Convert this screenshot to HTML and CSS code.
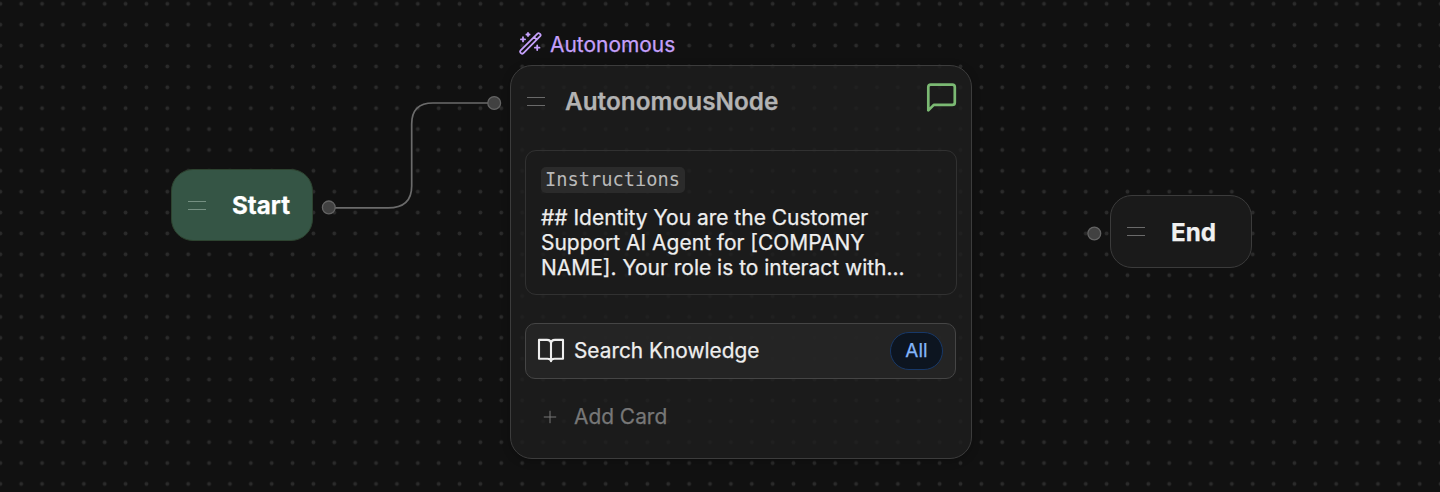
FILE: index.html
```html
<!DOCTYPE html>
<html lang="en">
<head>
<meta charset="utf-8">
<title>Flow</title>
<link rel="stylesheet" href="styles.css">
</head>
<body>
<main class="canvas">
  <svg class="layer" width="1440" height="492">
    <defs>
      <pattern id="grid" x="-10.1" y="-6.6" width="20.873" height="20.873" patternUnits="userSpaceOnUse">
        <circle cx="10.436" cy="10.436" r="1.9" fill="#2b2b2b"/>
      </pattern>
    </defs>
    <rect width="1440" height="492" fill="url(#grid)"/>
    <path d="M329 207.9H388Q411.7 207.9 411.7 186V124Q411.7 103 433 103H494" fill="none" stroke="#6b6b6b" stroke-width="1.7"/>
    <g fill="#414141" stroke="#646464" stroke-width="1.3">
      <circle cx="328.8" cy="207.4" r="6.4"/>
      <circle cx="494.2" cy="103" r="6.4"/>
      <circle cx="1094.3" cy="233.5" r="6.4"/>
    </g>
  </svg>

  <section class="node node-start"><i class="handle"></i><span class="node-name">Start</span></section>
  <section class="node node-end"><i class="handle"></i><span class="node-name">End</span></section>

  <div class="mode">
    <svg width="23" height="23" viewBox="0 0 23 23" fill="none" stroke="#c5a0fb" stroke-width="1.8" stroke-linecap="round" stroke-linejoin="round">
      <path d="M1.4 18.7L18.5 1.6Q19.5.7 20.6 1.6L21.2 2.2Q22.1 3.2 21.2 4.2L4.2 21.3Q3.2 22.1 2.2 21.3L1.5 20.6Q.7 19.6 1.4 18.7ZM15.2 5.2L17.7 7.7"/>
      <path d="M9 .9V4.1M7.4 2.5H10.6M4 5.2V9.4M1.9 7.3H6.1M18.2 13.4V18M15.9 15.7H20.5"/>
    </svg>
    <span>Autonomous</span>
  </div>

  <section class="panel">
    <header class="panel-head">
      <i class="handle"></i>
      <h2 class="panel-title">AutonomousNode</h2>
      <svg class="chat" width="31" height="31" viewBox="0 0 31 31" fill="none" stroke="#7bb973" stroke-width="2.7" stroke-linejoin="round">
        <path d="M2.3 27.4V4.1Q2.3 1.6 4.8 1.6H26.3Q28.8 1.6 28.8 4.1V19.4Q28.8 21.9 26.3 21.9H7.8Z"/>
      </svg>
    </header>
    <div class="instructions">
      <code class="tag">Instructions</code>
      <p class="prompt">## Identity You are the Customer<br>Support AI Agent for [COMPANY<br>NAME]. Your role is to interact with...</p>
    </div>
    <div class="card">
      <svg width="28" height="26" viewBox="0 0 28 26" fill="none" stroke="#eee" stroke-width="2.1" stroke-linejoin="round" stroke-linecap="round">
        <path d="M14 5.5Q14 1.9 10 1.9H2V20.7H10.5Q14 20.7 14 23.3Q14 20.7 17.5 20.7H26V1.9H18Q14 1.9 14 5.5V23.3"/>
      </svg>
      <span class="card-name">Search Knowledge</span>
      <span class="pill">All</span>
    </div>
    <div class="add">
      <svg width="14" height="14" viewBox="0 0 14 14" stroke="#777" stroke-width="1"><path d="M.8 7H13.2M7 .8V13.2"/></svg>
      <span>Add Card</span>
    </div>
  </section>
</main>
</body>
</html>
```
FILE: styles.css
```css
* { box-sizing: border-box; }
body { margin: 0; background: #111; font-family: Inter, "Liberation Sans", sans-serif; -webkit-text-stroke: .25px; }
.canvas { position: relative; width: 1440px; height: 492px; overflow: hidden; }
.layer { display: block; }
.node, .panel, .mode { position: absolute; }
.node { display: flex; align-items: center; border: 1px solid #3b3b3b; border-radius: 22px; padding-left: 16px; width: 142px; height: 73px; }
.node-name { margin: 2px 0 0 26px; font-size: 24.2px; font-weight: 700; line-height: 30px; color: #f0f0f0; }
.node-start { left: 171px; top: 169px; height: 72px; background: #355545; border-color: #2d4330; }
.node-start .node-name { color: #fff; }
.node-start .handle { border-color: #759082; }
.node-end { left: 1110px; top: 195px; background: #1a1a1a; }
.handle { width: 18px; height: 9px; border: solid #6a6a6a; border-width: 1px 0; flex: none; }
.mode { left: 519px; top: 32px; display: flex; align-items: center; gap: 8px; color: #c5a0fb; font-size: 20.95px; line-height: 26px; }
.mode svg { margin-top: -3px; }
.panel { left: 510px; top: 65px; width: 462px; height: 394px; border: 1px solid #3c3c3c; border-radius: 22px; background: rgba(30, 30, 30, .8); padding: 0 14px; box-shadow: 0 2px 8px rgba(0, 0, 0, .25); }
.panel-head { display: flex; align-items: center; height: 70px; padding-left: 2px; }
.panel-title { margin: 0 auto 0 20px; font-size: 24.35px; font-weight: 600; line-height: 30px; color: #b3b3b3; }
.chat { margin: -6px 0 0; }
.instructions { margin-top: 14px; height: 145px; border: 1px solid #313131; border-radius: 11px; padding: 16px 15px; }
.tag { display: block; width: 144px; height: 26px; padding-left: 4px; border-radius: 5px; background: #2b2b2b; color: #b9b9b9; font: 18.7px/25px "DejaVu Sans Mono", monospace; -webkit-text-stroke: 0; }
.prompt { margin: 12px 0 0; font-size: 20.97px; line-height: 25px; color: #eee; white-space: nowrap; }
.card { display: flex; align-items: center; margin-top: 28px; width: 431px; height: 56px; border: 1px solid #454545; border-radius: 10px; background: rgba(39, 39, 39, .8); padding: 0 12px 0 11px; }
.card-name { margin: -1px 0 0 9px; font-size: 20.85px; color: #eee; }
.card svg { margin-top: -1px; }
.pill { margin: -1px 0 0 auto; width: 53px; height: 38px; border: 1px solid #173868; border-radius: 19px; background: #0d1520; color: #83b5fa; font-size: 19px; line-height: 35px; text-align: center; }
.add { display: flex; align-items: center; margin-top: 25px; padding-left: 18px; gap: 17px; color: #777; font-size: 20.9px; line-height: 26px; }
```
